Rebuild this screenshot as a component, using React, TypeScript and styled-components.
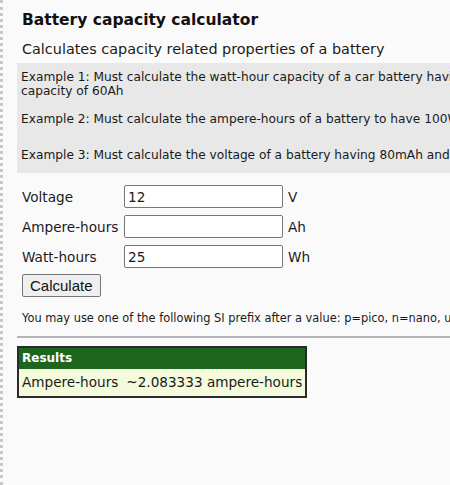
import React from 'react';
import styled, { createGlobalStyle } from 'styled-components';

const GlobalStyle = createGlobalStyle`
  html, body {
    margin: 0;
    padding: 0;
    background: #fafafa;
    overflow: hidden;
  }
  body {
    font-family: "DejaVu Sans", Verdana, sans-serif;
    color: #1a1a1a;
  }
`;

const fields = [
  { label: 'Voltage', value: '12', unit: 'V' },
  { label: 'Ampere-hours', value: '', unit: 'Ah' },
  { label: 'Watt-hours', value: '25', unit: 'Wh' },
];

const examples = [
  { lines: ['Example 1: Must calculate the watt-hour capacity of a car battery having a', 'capacity of 60Ah'], gap: 14 },
  { lines: ['Example 2: Must calculate the ampere-hours of a battery to have 100Wh at 12V'], gap: 22 },
  { lines: ['Example 3: Must calculate the voltage of a battery having 80mAh and 1Wh'], gap: 0 },
];

export default function App() {
  return (
    <>
      <GlobalStyle />
      <Page>
        <Title>Battery capacity calculator</Title>
        <Subtitle>Calculates capacity related properties of a battery</Subtitle>
        <Examples>
          {examples.map((ex) => (
            <Example key={ex.lines[0]} $gap={ex.gap}>
              {ex.lines.map((l) => <div key={l}>{l}</div>)}
            </Example>
          ))}
        </Examples>
        <Form>
          {fields.map((f) => (
            <React.Fragment key={f.label}>
              <Label>{f.label}</Label>
              <Input type="text" defaultValue={f.value} />
              <Label>{f.unit}</Label>
            </React.Fragment>
          ))}
        </Form>
        <Button>Calculate</Button>
        <Note>You may use one of the following SI prefix after a value: p=pico, n=nano, u=micro, m=milli, k=kilo</Note>
        <Rule />
        <Results>
          <ResultsHead>Results</ResultsHead>
          <ResultsRow>
            <span>Ampere-hours</span>
            <span>~2.083333 ampere-hours</span>
          </ResultsRow>
        </Results>
      </Page>
    </>
  );
}

const Page = styled.div`
  min-height: 485px;
  box-sizing: border-box;
  border-left: 3px dotted #c8c8c8;
  padding: 8px 0 0 14px;
  width: 700px;
`;

const Title = styled.h1`
  margin: 0 0 0 5px;
  font-size: 15.5px;
  font-weight: bold;
  line-height: 24px;
  color: #111;
`;

const Subtitle = styled.h2`
  margin: 7px 0 0 5px;
  font-size: 14.4px;
  font-weight: normal;
  line-height: 20px;
  color: #1a1a1a;
`;

const Examples = styled.div`
  margin-top: 4px;
  width: 560px;
  background: #e8e8e8;
  padding: 7px 4px 11px 4px;
`;

const Example = styled.div<{ $gap: number }>`
  margin: 0 0 ${(p) => p.$gap}px 0;
  font-size: 12.2px;
  line-height: 14px;
  white-space: nowrap;
  color: #1a1a1a;
`;

const Form = styled.div`
  margin: 12px 0 0 5px;
  display: grid;
  grid-template-columns: 97px 159px auto;
  grid-auto-rows: 23px;
  row-gap: 7px;
  column-gap: 5px;
  align-items: center;
  width: 320px;
`;

const Label = styled.span`
  font-size: 13.6px;
`;

const Input = styled.input`
  box-sizing: border-box;
  width: 159px;
  height: 23px;
  border: 1px solid #767676;
  border-radius: 2px;
  padding: 1px 3px;
  font-family: "DejaVu Sans", Verdana, sans-serif;
  font-size: 13.6px;
  color: #1a1a1a;
  background: #fff;
`;

const Button = styled.button`
  display: block;
  margin: 6px 0 0 5px;
  height: 23px;
  padding: 0 7px;
  border: 1px solid #767676;
  border-radius: 2px;
  background: #efefef;
  font-family: "Liberation Sans", Arial, sans-serif;
  font-size: 15px;
  color: #111;
`;

const Note = styled.p`
  margin: 14px 0 0 5px;
  font-size: 11.4px;
  line-height: 14px;
  white-space: nowrap;
`;

const Rule = styled.hr`
  margin: 11px 0 0 0;
  border: none;
  border-top: 2px solid #b4b4b4;
`;

const Results = styled.div`
  margin-top: 8px;
  width: 290px;
  box-sizing: border-box;
  border: 2px solid #2a2a2a;
`;

const ResultsHead = styled.div`
  background: #1e661e;
  color: #fff;
  font-size: 12px;
  font-weight: bold;
  height: 21px;
  line-height: 21px;
  padding-left: 3px;
`;

const ResultsRow = styled.div`
  background: #f4fbdc;
  font-size: 13.6px;
  height: 27px;
  line-height: 27px;
  padding-left: 3px;
  display: flex;
  gap: 8px;
  white-space: nowrap;
`;
